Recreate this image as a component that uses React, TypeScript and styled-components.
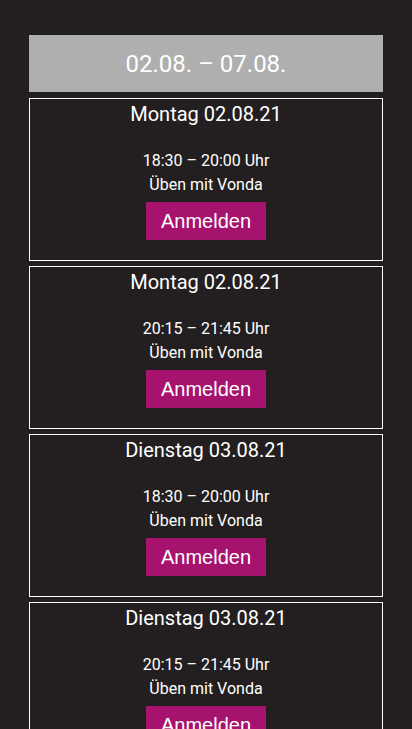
import React from "react";
import styled, { createGlobalStyle } from "styled-components";

const Global = createGlobalStyle`
  html, body { margin: 0; padding: 0; background: #231f20; }
  body { font-family: Roboto, "Liberation Sans", sans-serif; color: #fff; }
`;

const Page = styled.div`
  padding: 0 29px;
  overflow: hidden;
`;

const Title = styled.h1`
  margin: -24px 0 0;
  height: 26px;
  font-size: 24px;
  font-weight: 500;
  line-height: 20px;
  text-align: center;
  color: #fff;
  white-space: nowrap;
`;

const WeekBanner = styled.div`
  margin-top: 33px;
  height: 57px;
  background: #afafaf;
  display: flex;
  align-items: center;
  justify-content: center;
  font-size: 24px;
  color: #fff;
`;

const List = styled.div`
  display: flex;
  flex-direction: column;
  gap: 5px;
  margin-top: 6px;
`;

const Card = styled.div`
  border: 1px solid #fff;
  height: 161px;
  display: flex;
  flex-direction: column;
  align-items: center;
  text-align: center;
`;

const Day = styled.div`
  margin-top: 3px;
  font-size: 20px;
  line-height: 24px;
`;

const Time = styled.div`
  margin-top: 23px;
  font-size: 16px;
  line-height: 24px;
`;

const Info = styled.div`
  font-size: 16px;
  line-height: 24px;
`;

const Button = styled.button`
  margin-top: 5px;
  width: 120px;
  height: 38px;
  border: none;
  background: #a6136f;
  color: #fff;
  font-family: "Liberation Sans", Arial, sans-serif;
  font-size: 20px;
  padding: 0;
  cursor: pointer;
`;

const events = [
  { day: "Montag 02.08.21", time: "18:30 – 20:00 Uhr" },
  { day: "Montag 02.08.21", time: "20:15 – 21:45 Uhr" },
  { day: "Dienstag 03.08.21", time: "18:30 – 20:00 Uhr" },
  { day: "Dienstag 03.08.21", time: "20:15 – 21:45 Uhr" },
];

export default function App() {
  return (
    <Page>
      <Global />
      <Title>Anmeldung Training</Title>
      <WeekBanner>02.08. – 07.08.</WeekBanner>
      <List>
        {events.map((e, i) => (
          <Card key={i}>
            <Day>{e.day}</Day>
            <Time>{e.time}</Time>
            <Info>Üben mit Vonda</Info>
            <Button>Anmelden</Button>
          </Card>
        ))}
      </List>
    </Page>
  );
}
